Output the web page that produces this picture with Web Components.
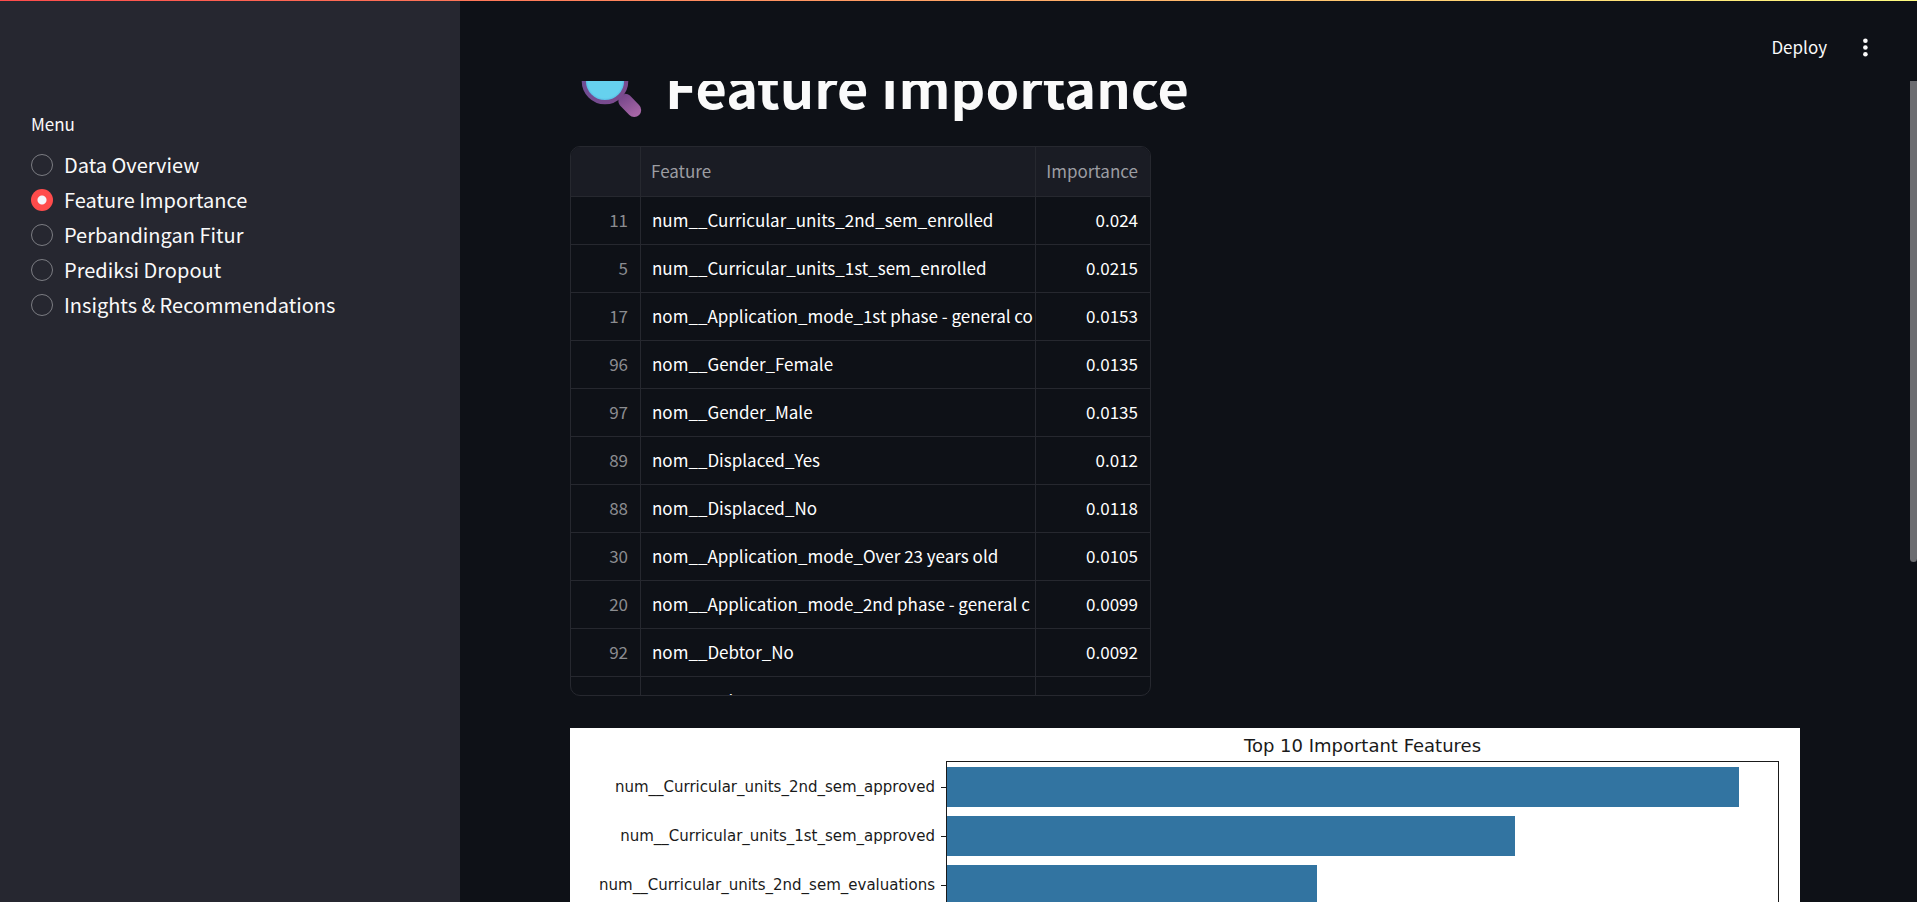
<!DOCTYPE html>
<html lang="id">
<head>
<meta charset="utf-8">
<title>Feature Importance</title>
<style>
  html, body { height: 100%; }
  body {
    margin: 0;
    background: #0e1117;
    color: #fafafa;
    font-family: "Noto Sans CJK SC", "Noto Sans", sans-serif;
  }
</style>
</head>
<body>
<app-shell>
  <side-menu slot="sidebar" label="Menu" selected="Feature Importance"></side-menu>
  <app-toolbar slot="toolbar"></app-toolbar>
  <page-title>Feature Importance</page-title>
  <data-grid></data-grid>
  <bar-chart heading="Top 10 Important Features"></bar-chart>
</app-shell>

<script>
class AppShell extends HTMLElement {
  constructor() {
    super();
    this.attachShadow({ mode: "open" }).innerHTML = `
      <style>
        :host { display: flex; height: 100vh; position: relative; overflow: hidden; }
        .accent {
          position: absolute; inset: 0 0 auto 0; height: 1px; z-index: 3;
          background: linear-gradient(90deg, #ff4b4b, #fffd80);
        }
        aside { flex: 0 0 460px; background: #262730; }
        .view { flex: 1; min-width: 0; position: relative; }
        .bar { position: absolute; inset: 0 0 auto 0; z-index: 2; }
        main {
          height: 100%; box-sizing: border-box; overflow-y: auto; scrollbar-width: none;
          padding: 120px 117px 0 110px;
        }
        .content { padding-bottom: 200px; }
        .thumb {
          position: absolute; right: 0; width: 7px; z-index: 1;
          border-radius: 4px; background: #6c6d71;
        }
      </style>
      <div class="accent"></div>
      <aside><slot name="sidebar"></slot></aside>
      <div class="view">
        <div class="bar"><slot name="toolbar"></slot></div>
        <main><div class="content"><slot></slot></div></main>
        <div class="thumb" aria-hidden="true"></div>
      </div>`;
  }
  ready() {
    const main = this.shadowRoot.querySelector("main");
    const thumb = this.shadowRoot.querySelector(".thumb");
    const sync = () => {
      thumb.style.height = 100 * main.clientHeight / main.scrollHeight + "%";
      thumb.style.top = 100 * main.scrollTop / main.scrollHeight + "%";
    };
    main.addEventListener("scroll", sync);
    addEventListener("resize", sync);
    main.scrollTop = 67;
    sync();
  }
}

class SideMenu extends HTMLElement {
  connectedCallback() {
    const items = ["Data Overview", "Feature Importance", "Perbandingan Fitur",
      "Prediksi Dropout", "Insights & Recommendations"];
    const root = this.attachShadow({ mode: "open" });
    root.innerHTML = `
      <style>
        :host { display: block; padding: 112px 31px 0; }
        fieldset { border: 0; margin: 0; padding: 0; }
        legend { padding: 0; font-size: 17px; line-height: 24px; margin-bottom: 11px; }
        label { display: flex; align-items: center; gap: 11px; font-size: 20px; line-height: 35px; }
        input {
          appearance: none; flex: none; box-sizing: border-box; margin: 0;
          width: 22px; height: 22px; border-radius: 50%; border: 1px solid #7b7c82;
        }
        input:checked {
          border: 0;
          background: radial-gradient(circle, #f4f5fa 4px, #ff4b4b 5px);
        }
      </style>
      <fieldset><legend></legend></fieldset>`;
    root.querySelector("legend").textContent = this.getAttribute("label");
    for (const item of items) {
      const label = document.createElement("label");
      const input = document.createElement("input");
      input.type = "radio";
      input.name = "page";
      input.value = item;
      input.checked = item === this.getAttribute("selected");
      label.append(input, item);
      root.querySelector("fieldset").append(label);
    }
  }
}

class AppToolbar extends HTMLElement {
  constructor() {
    super();
    this.attachShadow({ mode: "open" }).innerHTML = `
      <style>
        :host {
          display: flex; align-items: center; justify-content: flex-end; gap: 26px;
          height: 81px; box-sizing: border-box; padding: 13px 40px 0 0; background: #0e1117;
        }
        button { border: 0; background: none; color: inherit; font: inherit; padding: 0; cursor: pointer; }
        .deploy { font-size: 17px; line-height: 24px; }
        svg { display: block; fill: #fafafa; }
      </style>
      <button class="deploy">Deploy</button>
      <button aria-label="Main menu">
        <svg width="24" height="24" viewBox="0 0 24 24">
          <circle cx="12.4" cy="5.8" r="2.3"/><circle cx="12.4" cy="12.5" r="2.3"/><circle cx="12.4" cy="19.2" r="2.3"/>
        </svg>
      </button>`;
  }
}

class PageTitle extends HTMLElement {
  constructor() {
    super();
    this.attachShadow({ mode: "open" }).innerHTML = `
      <style>
        :host { display: block; margin-bottom: 27px; }
        h1 { display: flex; gap: 17px; margin: 0; font-size: 54px; font-weight: 700; line-height: 66px; white-space: nowrap; }
        svg { flex: none; display: block; }
      </style>
      <h1>
        <svg width="78" height="66" viewBox="0 0 78 66" aria-hidden="true">
          <defs>
            <radialGradient id="lens"><stop offset=".8" stop-color="#66d1ee"/><stop offset="1" stop-color="#4aa9dc"/></radialGradient>
            <linearGradient id="grip" x1="0" y1="0" x2=".6" y2="1"><stop stop-color="#6f4286"/><stop offset="1" stop-color="#a666a6"/></linearGradient>
            <linearGradient id="rim" x1="0" y1="0" x2="1" y2="1"><stop stop-color="#694e96"/><stop offset="1" stop-color="#7d4a8c"/></linearGradient>
          </defs>
          <path fill="url(#grip)" d="M50.2 43.2a7 7 0 0 1 9.7-.7l9.2 9.6a7 7 0 0 1-9.8 10l-9.5-9.9a7 7 0 0 1 .4-9z"/>
          <circle cx="35" cy="28" r="21.2" fill="url(#lens)" stroke="url(#rim)" stroke-width="4.2"/>
        </svg>
        <slot></slot>
      </h1>`;
  }
}

class DataGrid extends HTMLElement {
  connectedCallback() {
    const rows = [
      [11, "num__Curricular_units_2nd_sem_enrolled", "0.024"],
      [5, "num__Curricular_units_1st_sem_enrolled", "0.0215"],
      [17, "nom__Application_mode_1st phase - general co", "0.0153"],
      [96, "nom__Gender_Female", "0.0135"],
      [97, "nom__Gender_Male", "0.0135"],
      [89, "nom__Displaced_Yes", "0.012"],
      [88, "nom__Displaced_No", "0.0118"],
      [30, "nom__Application_mode_Over 23 years old", "0.0105"],
      [20, "nom__Application_mode_2nd phase - general c", "0.0099"],
      [92, "nom__Debtor_No", "0.0092"],
      [93, "nom__Debtor_Yes", "0.0092"]
    ];
    this.attachShadow({ mode: "open" }).innerHTML = `
      <style>
        :host {
          display: block; box-sizing: border-box; width: 581px; max-width: 100%; height: 550px;
          overflow: hidden; border: 1px solid #26282f; border-radius: 10px; margin-bottom: 32px;
        }
        table { width: 100%; table-layout: fixed; border-collapse: separate; border-spacing: 0; font-size: 17px; line-height: 24px; }
        th, td {
          box-sizing: border-box; height: 48px; padding: 0 12px 2px 11px; text-align: left; font-weight: 400;
          white-space: nowrap; overflow: hidden; border: 0 solid #26282f; border-width: 0 1px 1px 0;
        }
        td { color: #fff; }
        td:nth-child(2) { padding-right: 0; }
        thead th { height: 50px; background: #1a1c24; color: #9c9da2; padding-left: 10px; }
        tbody th { text-align: right; color: #8b8c90; }
        tbody tr:last-child > * { padding-bottom: 0; }
        tr > :last-child { text-align: right; border-right: 0; }
        .index { width: 70px; }
        .value { width: 114px; }
      </style>
      <table>
        <colgroup><col class="index"><col><col class="value"></colgroup>
        <thead><tr><th></th><th scope="col">Feature</th><th scope="col">Importance</th></tr></thead>
        <tbody>${rows.map(([i, f, v]) =>
          `<tr><th scope="row">${i}</th><td>${f}</td><td>${v}</td></tr>`).join("")}</tbody>
      </table>`;
  }
}

class BarChart extends HTMLElement {
  connectedCallback() {
    const bars = [
      ["num__Curricular_units_2nd_sem_approved", 95.3],
      ["num__Curricular_units_1st_sem_approved", 68.4],
      ["num__Curricular_units_2nd_sem_evaluations", 44.5]
    ];
    this.attachShadow({ mode: "open" }).innerHTML = `
      <style>
        :host { display: block; background: #fff; color: #1a1a1a; font-family: "DejaVu Sans", sans-serif; }
        figure {
          display: grid; grid-template: 33px 1fr / 376px 1fr; box-sizing: border-box;
          min-height: 560px; margin: 0; padding: 0 21px 32px 0;
        }
        figcaption { grid-column: 2; text-align: center; font-size: 18px; line-height: 36px; white-space: nowrap; }
        ul { display: flex; flex-direction: column; gap: 9px; list-style: none; margin: 0; padding: 6px 0 0; }
        li { display: flex; align-items: center; justify-content: flex-end; gap: 6px; height: 40px; font-size: 15px; white-space: nowrap; }
        li::after { content: ""; width: 5px; height: 1px; background: #1a1a1a; }
        .plot { display: flex; flex-direction: column; gap: 9px; padding-top: 5px; border: 1px solid #1a1a1a; }
        .plot div { height: 40px; background: #3274a1; }
      </style>
      <figure>
        <figcaption>${this.getAttribute("heading")}</figcaption>
        <ul>${bars.map(([name]) => `<li>${name}</li>`).join("")}</ul>
        <div class="plot">${bars.map(([, size]) => `<div style="width:${size}%"></div>`).join("")}</div>
      </figure>`;
  }
}

customElements.define("side-menu", SideMenu);
customElements.define("app-toolbar", AppToolbar);
customElements.define("page-title", PageTitle);
customElements.define("data-grid", DataGrid);
customElements.define("bar-chart", BarChart);
customElements.define("app-shell", AppShell);
document.querySelector("app-shell").ready();
</script>
</body>
</html>
